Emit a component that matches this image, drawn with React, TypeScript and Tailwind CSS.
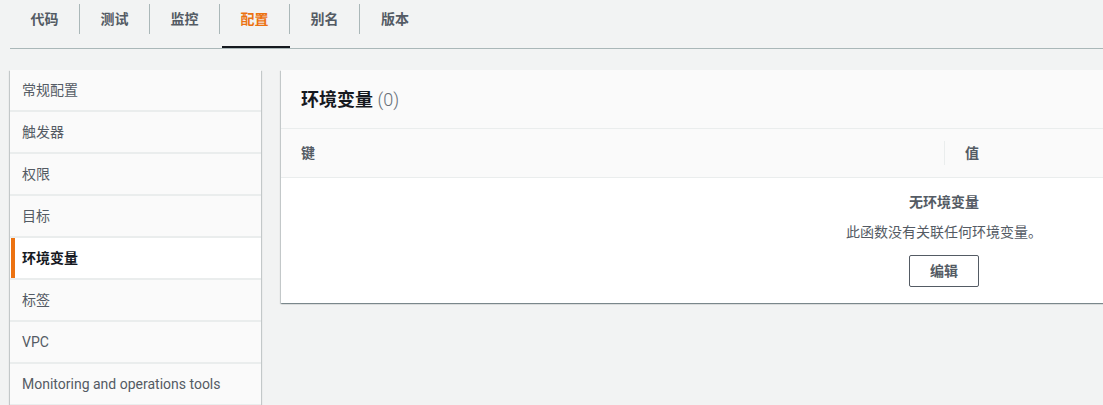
import React from 'react';

const TABS = ['代码', '测试', '监控', '配置', '别名', '版本'];
const ACTIVE_TAB = '配置';

const NAV_ITEMS = ['常规配置', '触发器', '权限', '目标', '环境变量', '标签', 'VPC', 'Monitoring and operations tools'];
const ACTIVE_NAV = '环境变量';

const FONT = 'Roboto, "Noto Sans CJK SC", sans-serif';
const CARD_SHADOW = 'shadow-[0_1px_1px_0_rgba(0,28,36,0.3),1px_1px_1px_0_rgba(0,28,36,0.15),-1px_1px_1px_0_rgba(0,28,36,0.15)]';

const App: React.FC = () => {
  return (
    <div className="h-screen w-full overflow-hidden bg-[#f2f3f3] text-[14px] text-[#545b64]" style={{ fontFamily: FONT }}>
      {/* Tabs */}
      <div className="ml-[10px] flex h-[49px] border-b border-[#aab7b8]">
        {TABS.map((tab, i) => {
          const active = tab === ACTIVE_TAB;
          return (
            <div key={tab} className="relative h-full w-[70px]">
              <div
                className={`mt-[4px] flex h-[30px] items-center justify-center font-bold ${
                  i < TABS.length - 1 ? 'border-r border-[#aab7b8]' : ''
                } ${active ? 'text-[#ec7211]' : 'text-[#545b64]'}`}
              >
                {tab}
              </div>
              {active && <div className="absolute bottom-0 left-[2px] right-0 h-[2px] bg-[#16191f]" />}
            </div>
          );
        })}
      </div>

      <div className="mt-[21px] flex gap-[20px] pl-[10px]">
        {/* Side nav */}
        <div className={`flex w-[251px] shrink-0 flex-col gap-[2px] bg-[#eaeded] pb-[2px] ${CARD_SHADOW}`}>
          {NAV_ITEMS.map((item) => {
            const active = item === ACTIVE_NAV;
            return (
              <div
                key={item}
                className={`relative flex h-[40px] items-center px-[12px] ${
                  active ? 'bg-white font-bold text-[#16191f]' : 'bg-[#fafafa] text-[#545b64]'
                }`}
              >
                {active && <div className="absolute bottom-0 left-[1px] top-0 w-[4px] bg-[#ec7211]" />}
                {item}
              </div>
            );
          })}
        </div>

        {/* Env vars panel */}
        <div className={`h-fit w-[1326px] shrink-0 bg-white ${CARD_SHADOW}`}>
          <div className="flex h-[59px] items-center border-b border-[#eaeded] bg-[#fafafa] px-[20px]">
            <h2 className="text-[18px] font-bold text-[#16191f]">
              环境变量
              {' '}
              <span className="font-light text-[#687078]">(0)</span>
            </h2>
          </div>
          <div className="grid h-[49px] grid-cols-2 items-center border-b border-[#eaeded] bg-[#fafafa] font-bold text-[#545b64]">
            <div className="pl-[20px]">键</div>
            <div className="flex h-[24px] items-center border-l border-[#eaeded] pl-[20px]">值</div>
          </div>
          <div className="flex flex-col items-center pb-[16px] pt-[14px]">
            <div className="leading-[20px] font-bold text-[#545b64]">无环境变量</div>
            <div className="mt-[10px] leading-[20px] text-[#545b64]">此函数没有关联任何环境变量。</div>
            <button
              type="button"
              className="mt-[13px] h-[32px] w-[70px] rounded-[2px] border border-[#545b64] bg-white font-bold text-[#545b64]"
            >
              编辑
            </button>
          </div>
        </div>
      </div>
    </div>
  );
};

export default App;
